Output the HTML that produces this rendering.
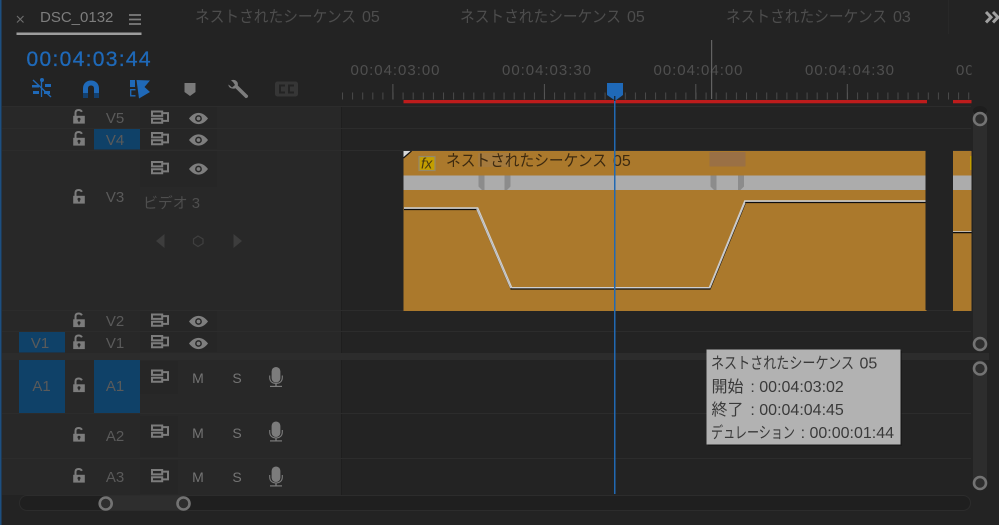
<!DOCTYPE html>
<html lang="ja">
<head>
<meta charset="utf-8">
<title>Timeline</title>
<style>
html,body{margin:0;padding:0;background:#232323;width:999px;height:525px;overflow:hidden}
svg{display:block}
text{font-family:"Liberation Sans","Noto Sans CJK JP",sans-serif}
.tab{font-size:16px;fill:#4d4d4d}
.rl{font-size:15px;fill:#4f4f4f}
.tl{font-size:15px;fill:#5a5a5a;text-anchor:middle}
.ms{font-size:14px;fill:#747474;text-anchor:middle}
.tip{font-size:16px;fill:#3a3a3a}
.ttl{font-size:16px;fill:#3d2a10}
</style>
</head>
<body>
<svg width="999" height="525" viewBox="0 0 999 525" xmlns="http://www.w3.org/2000/svg">
<defs>
<pattern id="ticks" patternUnits="userSpaceOnUse" x="342" y="0" width="10.1" height="10"><rect width="1" height="10" fill="#4a4a4a"/></pattern>
<g id="lock" fill="#7c7c7c">
<path d="M-5.8 -1.2H5.8V6.6H-5.8Z"/>
<path d="M-3.5 -1V-4.2C-3.5 -6.2 -2.2 -7 -.4 -7C1.1 -7 2.3 -6.4 2.9 -5.2" fill="none" stroke="#7c7c7c" stroke-width="2"/>
<circle cx="0" cy="2.2" r="1.5" fill="#282828"/><rect x="-.7" y="2.4" width="1.4" height="2.4" fill="#282828"/>
</g>
<g id="tog" fill="none" stroke="#7c7c7c" stroke-width="2">
<path d="M1 1H11.2V5.4H1Z"/><path d="M1 8.2H11.2V12.3H1Z"/><path d="M11.2 2.6H17V10.4H11.2"/>
</g>
<g id="eye">
<path d="M-9.5 0C-6.5 -3.8 -3.3 -5.6 0 -5.6C3.3 -5.6 6.5 -3.8 9.5 0C6.5 3.8 3.3 5.6 0 5.6C-3.3 5.6 -6.5 3.8 -9.5 0Z" fill="#7e7e7e"/>
<circle r="3.4" fill="#282828"/><circle r="1.9" fill="#7e7e7e"/>
</g>
<g id="mic" fill="#7c7c7c">
<rect x="-4.4" y="-10" width="8.800" height="15.500" rx="4.400"/>
<path d="M-6.300 -1.500V.5C-6.300 4.500 -3.500 6.500 0 6.500C3.500 6.500 6.300 4.500 6.300 .5V-1.500" fill="none" stroke="#7c7c7c" stroke-width="1.100"/>
<rect x="-.7" y="6.500" width="1.400" height="2.800"/><rect x="-6" y="8.800" width="12" height="1.200"/>
</g>
<g id="ring"><circle r="6" fill="#2e2e2e" stroke="#737373" stroke-width="2.6"/></g>
<clipPath id="rc"><rect x="340" y="50" width="631.5" height="50"/></clipPath>
</defs>

<rect width="999" height="525" fill="#232323"/>
<rect x="0" y="0" width="1.5" height="525" fill="#1d4f80"/>

<!-- Header column -->
<rect x="2" y="106" width="339" height="389" fill="#282828"/>
<rect x="341" y="106" width="1" height="389" fill="#1e1e1e"/>
<rect x="140" y="107" width="77" height="42" fill="#262626"/>
<rect x="140" y="151" width="77" height="36" fill="#262626"/>
<rect x="140" y="311" width="77" height="41" fill="#262626"/>
<rect x="140" y="361" width="38" height="33" fill="#262626"/>
<rect x="140" y="416" width="38" height="41" fill="#262626"/>
<rect x="140" y="460" width="38" height="34" fill="#262626"/>

<!-- Row separators -->
<g fill="#2c2c2c">
<rect x="2" y="106" width="969" height="1"/>
<rect x="2" y="128" width="969" height="1"/>
<rect x="2" y="150" width="969" height="1"/>
<rect x="2" y="310" width="969" height="1"/>
<rect x="2" y="331" width="969" height="1"/>
<rect x="2" y="353" width="987" height="7"/>
<rect x="2" y="413" width="969" height="1"/>
<rect x="2" y="458" width="969" height="1"/>
</g>

<!-- Tabs -->
<path d="M17 16L23.500 22.500M23.500 16L17 22.500" stroke="#6e6e6e" stroke-width="1.100"/>
<text x="40" y="22" font-size="15" fill="#7d7d7d">DSC_0132</text>
<path d="M129 15H141M129 19.500H141M129 24H141" stroke="#7d7d7d" stroke-width="1.800"/>
<rect x="16.500" y="32.500" width="125" height="2.500" fill="#9d9d9d"/>
<text class="tab" x="195" y="22" textLength="161" lengthAdjust="spacingAndGlyphs">ネストされたシーケンス</text><text class="tab" x="362" y="22">05</text>
<text class="tab" x="460" y="22" textLength="161" lengthAdjust="spacingAndGlyphs">ネストされたシーケンス</text><text class="tab" x="627" y="22">05</text>
<text class="tab" x="726" y="22" textLength="161" lengthAdjust="spacingAndGlyphs">ネストされたシーケンス</text><text class="tab" x="893" y="22">03</text>
<rect x="948" y="0" width="1" height="34" fill="#282828"/>
<path d="M986 12L991 17.200L986 22.400M993 12L998 17.200L993 22.400" fill="none" stroke="#a0a0a0" stroke-width="3"/>

<!-- Timecode -->
<text x="26.500" y="66" font-size="21" fill="#1f69b8" stroke="#1f69b8" stroke-width=".3" textLength="124">00:04:03:44</text>

<!-- Toolbar icons -->
<g fill="#1f69b8">
<path d="M33 80L51 97" stroke="#1f69b8" stroke-width="1.400" fill="none"/>
<path d="M41.500 79V97" stroke="#1f69b8" stroke-width="1.300" fill="none"/>
<circle cx="42" cy="80" r="2"/>
<rect x="32" y="85" width="7" height="2.500"/><rect x="45" y="84" width="6" height="3"/>
<rect x="33" y="91" width="6" height="3"/><rect x="44" y="91" width="6" height="3"/>
<path d="M83 98V88.500C83 83.500 86.500 80.500 91 80.500C95.500 80.500 99 83.500 99 88.500V98H94V88.500C94 86.500 92.800 85.500 91 85.500C89.200 85.500 88 86.500 88 88.500V98Z"/>
<path d="M130 80H135V87H130Z"/>
<path d="M136.500 80L150 80.500L144.500 87L150 92L139 98.500Z"/>
<path d="M135.500 89.700H130.700V95.800H135.500" fill="none" stroke="#1f69b8" stroke-width="1.300"/>
</g>
<rect x="83" y="93" width="5" height="5" fill="#13406f"/><rect x="94" y="93" width="5" height="5" fill="#13406f"/>
<path d="M184.500 83H195.500V92L190 96L184.500 92Z" fill="#7a7a7a"/>
<path d="M228.500 84.500L232 87.500L235 85L233 82L231 80.500C233 79.300 236 80 237.300 82C238 83.200 238 84.500 237.800 85.500L248 95.500C248.500 97 247 98.500 245.500 98L235.500 88.200C233.500 89 231 88.800 229.500 87.300C228.700 86.500 228.400 85.500 228.500 84.500Z" fill="#7d7d7d"/>
<rect x="275" y="81.500" width="23" height="15" rx="2.500" fill="#363636"/>
<path d="M285 85.500H280V92.500H285M294 85.500H289V92.500H294" fill="none" stroke="#232323" stroke-width="2"/>

<!-- Ruler -->
<text class="rl" x="350.500" y="75" textLength="89">00:04:03:00</text>
<text class="rl" x="502" y="75" textLength="89">00:04:03:30</text>
<text class="rl" x="653.500" y="75" textLength="89">00:04:04:00</text>
<text class="rl" x="805" y="75" textLength="89">00:04:04:30</text>
<g clip-path="url(#rc)"><text class="rl" x="956" y="75" textLength="89">00:04:05:00</text></g>
<rect x="342" y="92.500" width="629.500" height="7" fill="url(#ticks)"/>
<g fill="#565656">
<rect x="392.400" y="84" width="1" height="15.500"/>
<rect x="543.900" y="84" width="1" height="15.500"/>
<rect x="695.300" y="84" width="1" height="15.500"/>
<rect x="846.800" y="84" width="1" height="15.500"/>
</g>
<rect x="711" y="40" width="1.200" height="59" fill="#626262"/>
<rect x="403.500" y="100" width="523.500" height="3.300" fill="#bd1c1c"/>
<rect x="953" y="100" width="18.500" height="3.300" fill="#bd1c1c"/>

<!-- Clips -->
<rect x="403.500" y="151" width="523" height="160" fill="#ab792c"/>
<rect x="953" y="151" width="18.500" height="160" fill="#ab792c"/>
<rect x="925.500" y="150" width="27.500" height="160" fill="#232323"/>
<rect x="403.500" y="175.500" width="522" height="14.500" fill="#acacac"/>
<rect x="953" y="175.500" width="18.500" height="14.500" fill="#acacac"/>
<rect x="478" y="153" width="32.500" height="14" fill="#a57a3d"/>
<rect x="709.500" y="152" width="36" height="14.500" fill="#9a7045"/>
<path d="M478.500 175.500H484.500V190H482L478.500 186.500ZM504.500 175.500H510.500V186.500L507 190H504.500Z" fill="#8c8c8c"/>
<path d="M710.500 175.500H716.500V190H714L710.500 186.500ZM738 175.500H744V186.500L740.500 190H738Z" fill="#8c8c8c"/>
<path d="M403.500 151H411.500L403.500 158Z" fill="#d8d8d8"/>
<path d="M411.500 151L403.500 158" stroke="#111" stroke-width="1.200"/>
<rect x="419" y="156.500" width="16" height="14" fill="#c39e00" stroke="#94896a" stroke-width="1.200"/>
<text x="421" y="168.500" font-size="14.500" font-style="italic" fill="#4a3a10">fx</text>
<rect x="970" y="156" width="1.500" height="14" fill="#c39e00"/>
<text class="ttl" x="446" y="166" textLength="161" lengthAdjust="spacingAndGlyphs">ネストされたシーケンス</text><text class="ttl" x="613" y="166">05</text>

<!-- Keyframe lines -->
<path d="M404 208.300H477.500L511.500 288H709.500L745 201.300H925.500" fill="none" stroke="#cfcfcf" stroke-width="2"/>
<path d="M404 209.500H477L511 289H710L745.500 202.500H925.500" fill="none" stroke="#0d0d0d" stroke-width="1.300"/>
<path d="M476.800 209L510.800 288.300M709.700 288.300L745 202.500" fill="none" stroke="#c8c8c8" stroke-width="1.300"/>
<path d="M953 232.500H971.500" stroke="#0d0d0d" stroke-width="1.500"/>
<path d="M953 231.500H971.500" stroke="#d9d9d9" stroke-width=".8"/>

<!-- Track highlight -->
<rect x="94" y="129" width="46" height="20.500" fill="#0f4168"/>
<rect x="19" y="332" width="46" height="20.500" fill="#0f4168"/>
<rect x="19" y="360" width="46" height="53" fill="#0f4168"/>
<rect x="94" y="360" width="46" height="53" fill="#0f4168"/>

<!-- Track labels -->
<text class="tl" x="115" y="123">V5</text>
<text class="tl" x="115" y="145">V4</text>
<text class="tl" x="115" y="202">V3</text>
<text class="tl" x="115" y="326">V2</text>
<text class="tl" x="115" y="348">V1</text>
<text class="tl" x="40" y="348">V1</text>
<text class="tl" x="41.500" y="391">A1</text>
<text class="tl" x="115" y="391">A1</text>
<text class="tl" x="115" y="441">A2</text>
<text class="tl" x="115" y="482">A3</text>
<text x="143" y="208" font-size="15" fill="#4e4e4e" textLength="57" lengthAdjust="spacingAndGlyphs">ビデオ 3</text>

<!-- Locks -->
<use href="#lock" x="79" y="117"/>
<use href="#lock" x="79" y="139"/>
<use href="#lock" x="79" y="197"/>
<use href="#lock" x="79" y="320.500"/>
<use href="#lock" x="79" y="342.500"/>
<use href="#lock" x="79" y="385.500"/>
<use href="#lock" x="79" y="435"/>
<use href="#lock" x="79" y="476"/>

<!-- Toggle sync -->
<use href="#tog" x="151" y="110.500"/>
<use href="#tog" x="151" y="132"/>
<use href="#tog" x="151" y="161"/>
<use href="#tog" x="151" y="313.500"/>
<use href="#tog" x="151" y="335"/>
<use href="#tog" x="151" y="369.500"/>
<use href="#tog" x="151" y="424.500"/>
<use href="#tog" x="151" y="469"/>

<!-- Eyes -->
<use href="#eye" x="198.500" y="118.500"/>
<use href="#eye" x="198.500" y="140"/>
<use href="#eye" x="198.500" y="169"/>
<use href="#eye" x="198.500" y="321.500"/>
<use href="#eye" x="198.500" y="343.500"/>

<!-- V3 keyframe nav -->
<path d="M164.500 234V248L156 241Z" fill="#3d3d3d"/>
<path d="M233.500 234V248L242 241Z" fill="#3d3d3d"/>
<path d="M198 236L203 239V243.500L198 246.500L193.500 243.500V239Z" fill="none" stroke="#3f3f3f" stroke-width="1.200"/>

<!-- Audio -->
<text class="ms" x="198" y="383">M</text><text class="ms" x="237" y="383">S</text>
<text class="ms" x="198" y="438">M</text><text class="ms" x="237" y="438">S</text>
<text class="ms" x="198" y="482">M</text><text class="ms" x="237" y="482">S</text>
<use href="#mic" x="276" y="377"/>
<use href="#mic" x="276" y="431.500"/>
<use href="#mic" x="276" y="476.500"/>

<!-- Scrollbars -->
<rect x="973" y="106" width="14" height="239" rx="7" fill="#2d2d2d"/>
<rect x="973" y="106" width="14" height="10" rx="7" fill="#1d1d1d"/>
<rect x="973" y="360" width="14" height="128" rx="7" fill="#2d2d2d"/>
<rect x="19.500" y="495.500" width="951" height="15" rx="7.500" fill="#1f1f1f" stroke="#2c2c2c"/>
<rect x="106" y="496" width="78" height="14" fill="#2e2e2e"/>
<use href="#ring" x="980" y="119"/>
<use href="#ring" x="980" y="344"/>
<use href="#ring" x="980" y="368.500"/>
<use href="#ring" x="980" y="483"/>
<use href="#ring" x="105.700" y="503.500"/>
<use href="#ring" x="183.500" y="503.500"/>

<!-- Playhead -->
<rect x="614" y="96" width="1.500" height="398" fill="#2169b3"/>
<path d="M607 83H623V95L615.500 100.500H615L607 95Z" fill="#1f69b8"/>
<rect x="614.300" y="96" width="1" height="5" fill="#111"/>

<!-- Tooltip -->
<rect x="708" y="351" width="194" height="95" fill="#141414" opacity=".55"/>
<rect x="706.500" y="349.500" width="194" height="95" fill="#b2b2b2"/>
<text class="tip" x="711" y="368.500" textLength="143" lengthAdjust="spacingAndGlyphs">ネストされたシーケンス</text><text class="tip" x="859.500" y="368.500">05</text>
<text class="tip" y="392"><tspan x="711.500">開始</tspan> <tspan x="750.400">: 00:04:03:02</tspan></text>
<text class="tip" y="415"><tspan x="711.500">終了</tspan> <tspan x="750.400">: 00:04:04:45</tspan></text>
<text class="tip" x="711" y="438" textLength="84" lengthAdjust="spacingAndGlyphs">デュレーション</text><text class="tip" x="800.600" y="438">: 00:00:01:44</text>
</svg>
</body>
</html>
